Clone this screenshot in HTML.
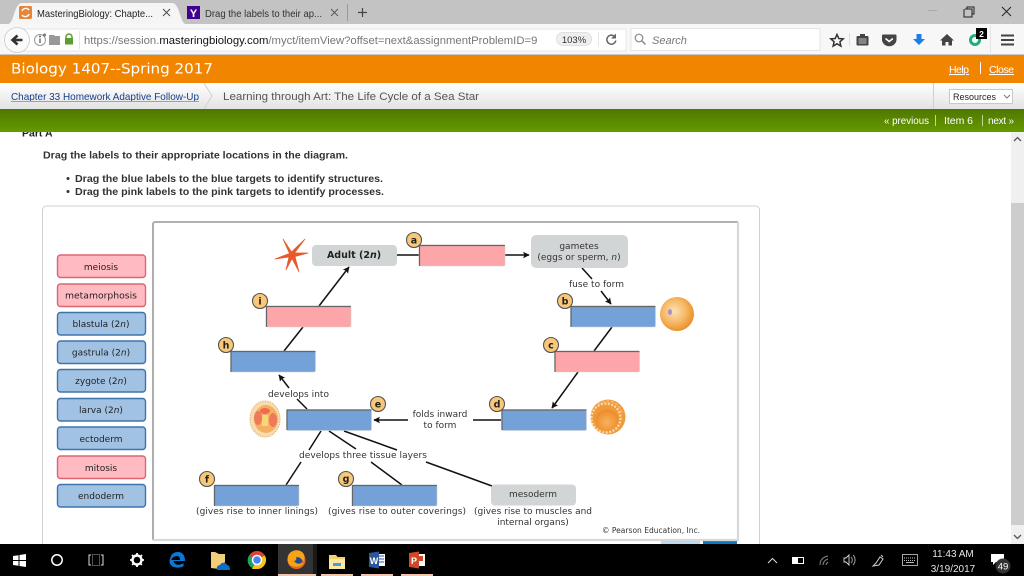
<!DOCTYPE html>
<html><head><meta charset="utf-8"><title>MasteringBiology</title>
<style>
html,body{margin:0;padding:0;width:1024px;height:576px;overflow:hidden;background:#fff}
svg{display:block;filter:blur(.22px)}
text{white-space:pre}
.ui{font-family:"Liberation Sans",sans-serif}
.dv{font-family:"DejaVu Sans",sans-serif}
.d{font-family:"DejaVu Sans",sans-serif;font-size:9px;fill:#333}
.lab{font-family:"DejaVu Sans",sans-serif;font-size:9px;fill:#222;text-anchor:middle}
.b{font-family:"DejaVu Sans",sans-serif;font-size:9.5px;font-weight:bold;fill:#222;text-anchor:middle}
.q{font-family:"Liberation Sans",sans-serif;font-size:10.5px;font-weight:bold;fill:#333}
</style></head><body>
<svg width="1024" height="576" viewBox="0 0 1024 576" xmlns="http://www.w3.org/2000/svg">
<defs>
<linearGradient id="bc" x1="0" y1="0" x2="0" y2="1"><stop offset="0" stop-color="#ffffff"/><stop offset="1" stop-color="#e2e2e2"/></linearGradient>
<linearGradient id="gr" x1="0" y1="0" x2="0" y2="1"><stop offset="0" stop-color="#4f7700"/><stop offset="1" stop-color="#669a00"/></linearGradient>
<radialGradient id="egg" cx=".42" cy=".42" r=".62"><stop offset="0" stop-color="#fce2b8"/><stop offset=".55" stop-color="#f5b866"/><stop offset="1" stop-color="#e98d22"/></radialGradient>
<radialGradient id="bl" cx=".5" cy=".6" r=".5"><stop offset="0" stop-color="#f7b25e"/><stop offset="1" stop-color="#ee8f2c"/></radialGradient>
<clipPath id="urlclip"><rect x="80" y="30" width="457" height="20"/></clipPath>
<marker id="ah" viewBox="0 0 10 10" refX="9" refY="5" markerWidth="4.4" markerHeight="4.4" orient="auto-start-reverse" markerUnits="strokeWidth"><path d="M0 0L10 5L0 10L2 5Z" fill="#111"/></marker>
</defs>

<!-- tab strip -->
<rect width="1024" height="24" fill="#c3c3c3"/>
<path d="M8 24C14 24 14 3 22 3H172C180 3 180 24 186 24Z" fill="#f5f5f5"/>
<rect x="19" y="6" width="13" height="13" rx="1.500" fill="#e8853a"/>
<path d="M22 11a4 4 0 0 1 7-1M29 14a4 4 0 0 1-7 1" stroke="#fff" stroke-width="1.400" fill="none"/>
<text class="ui" x="37" y="17" font-size="10.500" fill="#222" textLength="116" lengthAdjust="spacingAndGlyphs">MasteringBiology: Chapte...</text>
<path d="M163 9l7 7M170 9l-7 7" stroke="#444" stroke-width=".9"/>
<rect x="187" y="6" width="13" height="13" fill="#400090"/>
<text class="ui" x="193.500" y="17" font-size="11" font-weight="bold" fill="#fff" text-anchor="middle">Y</text>
<text class="ui" x="205" y="17" font-size="10.500" fill="#333" textLength="117" lengthAdjust="spacingAndGlyphs">Drag the labels to their ap...</text>
<path d="M331 9l7 7M338 9l-7 7" stroke="#555" stroke-width=".9"/>
<rect x="347" y="4" width="1" height="17" fill="#999"/>
<path d="M358 12.500h9M362.500 8v9" stroke="#444" stroke-width="1.200"/>
<rect x="928" y="10" width="9" height="1" fill="#aaa"/>
<path d="M965 9h7v8h-8v-8M967 9v-2h7v7h-2" stroke="#222" fill="none" stroke-width="1"/>
<path d="M1002 7l9 9M1011 7l-9 9" stroke="#222" stroke-width="1"/>

<!-- toolbar -->
<rect y="24" width="1024" height="30" fill="#f7f7f7"/>
<rect y="54" width="1024" height="1" fill="#c8c8c8"/>
<rect x="20" y="29" width="606" height="22" rx="1" fill="#fff" stroke="#e4e4e4"/>
<rect x="631" y="28.500" width="189" height="22" fill="#fff" stroke="#e4e4e4"/>
<circle cx="17" cy="40" r="12.500" fill="#fbfbfb" stroke="#d4d4d4"/>
<path d="M22.500 40H13M17.500 35.500L12.500 40L17.500 44.500" stroke="#333" stroke-width="2.600" fill="none"/>
<circle cx="40" cy="40" r="5.500" fill="none" stroke="#999"/>
<path d="M40 38.500v4.500" stroke="#666" stroke-width="1.400"/><circle cx="40" cy="36.500" r="1" fill="#666"/><circle cx="44.500" cy="35" r="1.500" fill="#777"/>
<path d="M49 35h5l1 1h5v9h-11z" fill="#999"/>
<path d="M66 38v-1a3 3 0 0 1 6 0v1" stroke="#5a9e30" stroke-width="1.500" fill="none"/><rect x="65" y="38" width="8" height="6.500" fill="#5a9e30"/>
<rect x="79" y="31" width="1" height="18" fill="#e6e6e6"/>
<g clip-path="url(#urlclip)"><text class="ui" x="84" y="44" font-size="11.300" fill="#777">https://session.<tspan fill="#111">masteringbiology.com</tspan>/myct/itemView?offset=next&amp;assignmentProblemID=92</text></g>
<rect x="556.500" y="32.500" width="35" height="13" rx="6.500" fill="#efefef" stroke="#e0e0e0"/>
<text class="ui" x="574" y="43" font-size="9.500" fill="#333" text-anchor="middle">103%</text>
<rect x="598" y="32" width="1" height="15" fill="#e8e8e8"/>
<path d="M615 37a4.500 4.500 0 1 0 .8 3.500" stroke="#666" stroke-width="1.500" fill="none"/><path d="M616 33.500v5h-5z" fill="#666"/>
<circle cx="639" cy="38" r="3.800" fill="none" stroke="#888" stroke-width="1.200"/><path d="M642 41l3.500 3.500" stroke="#888" stroke-width="1.500"/>
<text class="ui" x="652" y="44" font-size="11" font-style="italic" fill="#777">Search</text>
<path d="M837 34.500l1.800 4 4.400.4-3.300 2.900 1 4.300-3.900-2.300-3.900 2.300 1-4.300-3.300-2.900 4.400-.4z" fill="none" stroke="#333" stroke-width="1.500"/>
<rect x="849" y="33" width="1" height="13" fill="#ddd"/>
<rect x="856.500" y="36" width="12" height="9.500" rx="1" fill="#444"/><rect x="860" y="34" width="5" height="3" fill="#444"/>
<path d="M858.500 39h8M858.500 41h8M858.500 43h8" stroke="#eee" stroke-width=".8"/>
<path d="M883 34.500h12.500a1 1 0 0 1 1 1v4a7 6.500 0 0 1-14.500 0v-4a1 1 0 0 1 1-1z" fill="#444"/><path d="M885.500 38.500l3.700 3 3.700-3" stroke="#fff" stroke-width="1.600" fill="none"/>
<path d="M916.500 34h5v5h3.500l-6 6-6-6h3.500z" fill="#1a7fe8"/>
<path d="M947 34l-7 6.500h2v5h3.500v-3.500h3v3.500h3.500v-5h2z" fill="#444"/>
<circle cx="975" cy="40" r="4.500" fill="none" stroke="#1fae7f" stroke-width="3"/>
<rect x="976" y="28" width="11" height="11" fill="#000"/>
<text class="ui" x="981.500" y="37" font-size="8.500" font-weight="bold" fill="#fff" text-anchor="middle">2</text>
<rect x="990" y="25" width="1" height="28" fill="#e4e4e4"/>
<path d="M1001 35.500h13M1001 40h13M1001 44.500h13" stroke="#444" stroke-width="2"/>

<!-- page body -->
<rect y="132" width="1024" height="412" fill="#fff"/>
<text class="ui" x="22" y="136.500" font-size="10.500" font-weight="bold" fill="#222">Part A</text>

<!-- orange -->
<rect y="55" width="1024" height="28" fill="#f28500"/>
<text class="dv" x="11" y="73.500" font-size="14.500" fill="#fff" textLength="202" lengthAdjust="spacingAndGlyphs">Biology 1407--Spring 2017</text>
<text class="ui" x="949" y="73" font-size="10.500" fill="#fff" text-decoration="underline" textLength="20">Help</text>
<rect x="980" y="62" width="1" height="12" fill="#fff"/>
<text class="ui" x="989" y="73" font-size="10.500" fill="#fff" text-decoration="underline" textLength="25">Close</text>

<!-- breadcrumb -->
<rect y="83" width="1024" height="26" fill="url(#bc)"/>
<text class="ui" x="11" y="100" font-size="10.500" fill="#1a3e8c" textLength="188" lengthAdjust="spacingAndGlyphs">Chapter 33 Homework Adaptive Follow-Up</text>
<rect x="11" y="101" width="188" height="1" fill="#8ea2c8"/>
<path d="M204 83L212 96L204 109" fill="none" stroke="#d2d2d2"/>
<text class="ui" x="223" y="100" font-size="11" fill="#555" textLength="256" lengthAdjust="spacingAndGlyphs">Learning through Art: The Life Cycle of a Sea Star</text>
<rect x="933" y="83" width="1" height="26" fill="#cfcfcf"/>
<rect x="949.500" y="89.500" width="63" height="14" fill="#fff" stroke="#c8c8c8"/>
<text class="ui" x="953" y="100" font-size="9.500" fill="#222" textLength="43" lengthAdjust="spacingAndGlyphs">Resources</text>
<path d="M1004 95l3 3 3-3" stroke="#777" fill="none"/>

<!-- green -->
<rect y="109" width="1024" height="23" fill="url(#gr)"/>
<text class="ui" x="884" y="124" font-size="10" fill="#fff" textLength="45" lengthAdjust="spacingAndGlyphs">« previous</text>
<rect x="935" y="115" width="1" height="11" fill="#c4d69a"/>
<text class="ui" x="944" y="124" font-size="10.500" fill="#fff" textLength="29">Item 6</text>
<rect x="982" y="115" width="1" height="11" fill="#c4d69a"/>
<text class="ui" x="988" y="124" font-size="10" fill="#fff" textLength="26">next »</text>

<!-- question -->
<text class="q" x="43" y="158.500" textLength="305" lengthAdjust="spacingAndGlyphs">Drag the labels to their appropriate locations in the diagram.</text>
<circle cx="68" cy="178.500" r="1.500" fill="#333"/><circle cx="68" cy="191.500" r="1.500" fill="#333"/>
<text class="q" x="75" y="182" textLength="308" lengthAdjust="spacingAndGlyphs">Drag the blue labels to the blue targets to identify structures.</text>
<text class="q" x="75" y="195" textLength="309" lengthAdjust="spacingAndGlyphs">Drag the pink labels to the pink targets to identify processes.</text>
<path d="M42.500 544V210a4 4 0 0 1 4-4H755.500a4 4 0 0 1 4 4V544" fill="none" stroke="#d0d0d0"/>

<!-- scrollbar -->
<rect x="1011" y="132" width="13" height="412" fill="#f0f0f0"/>
<rect x="1011" y="203" width="13" height="322" fill="#cdcdcd"/>
<path d="M1014 141l3.500-3.500 3.500 3.500M1014 535l3.500 3.500 3.500-3.500" stroke="#555" stroke-width="1.300" fill="none"/>

<g>
<!-- diagram frame -->
<rect x="661" y="540" width="39" height="4" fill="#b7dbf2"/>
<rect x="703" y="540" width="34" height="4" fill="#0d79c0"/>
<rect x="153.500" y="222.500" width="585" height="317" rx="2" fill="#fff"/>
<path d="M153 540V224a2 2 0 0 1 2-2H738" fill="none" stroke="#a6a6a6" stroke-width="1.800"/>
<path d="M738 222V540H153" fill="none" stroke="#d8d8d8" stroke-width="2.200"/>

<!-- left labels -->
<g stroke-width="1.400">
<rect x="57.500" y="255" width="88" height="22.500" rx="3" fill="#ffbac2" stroke="#dc6570"/>
<rect x="57.500" y="284" width="88" height="22.500" rx="3" fill="#ffbac2" stroke="#dc6570"/>
<rect x="57.500" y="312.500" width="88" height="22.500" rx="3" fill="#a2c2e4" stroke="#3e74ae"/>
<rect x="57.500" y="341" width="88" height="22.500" rx="3" fill="#a2c2e4" stroke="#3e74ae"/>
<rect x="57.500" y="369.500" width="88" height="22.500" rx="3" fill="#a2c2e4" stroke="#3e74ae"/>
<rect x="57.500" y="398.500" width="88" height="22.500" rx="3" fill="#a2c2e4" stroke="#3e74ae"/>
<rect x="57.500" y="427" width="88" height="22.500" rx="3" fill="#a2c2e4" stroke="#3e74ae"/>
<rect x="57.500" y="456" width="88" height="22.500" rx="3" fill="#ffbac2" stroke="#dc6570"/>
<rect x="57.500" y="484.500" width="88" height="22.500" rx="3" fill="#a2c2e4" stroke="#3e74ae"/>
</g>
<text class="lab" x="101" y="270">meiosis</text>
<text class="lab" x="101" y="298.500" textLength="72" lengthAdjust="spacingAndGlyphs">metamorphosis</text>
<text class="lab" x="101" y="327">blastula (2<tspan font-style="italic">n</tspan>)</text>
<text class="lab" x="101" y="355.500">gastrula (2<tspan font-style="italic">n</tspan>)</text>
<text class="lab" x="101" y="384">zygote (2<tspan font-style="italic">n</tspan>)</text>
<text class="lab" x="101" y="413">larva (2<tspan font-style="italic">n</tspan>)</text>
<text class="lab" x="101" y="442">ectoderm</text>
<text class="lab" x="101" y="471">mitosis</text>
<text class="lab" x="101" y="499">endoderm</text>

<!-- connectors -->
<g stroke="#111" stroke-width="1.500" fill="none">
<path d="M397 255H419"/>
<path d="M505 255H529" marker-end="url(#ah)"/>
<path d="M582 268L592 279"/>
<path d="M601 291L611 304" marker-end="url(#ah)"/>
<path d="M612 327L594 351"/>
<path d="M578 372L552 408" marker-end="url(#ah)"/>
<path d="M473 420H501"/>
<path d="M408 420H374" marker-end="url(#ah)"/>
<path d="M307 409L297 399"/>
<path d="M289 388L279 375" marker-end="url(#ah)"/>
<path d="M284 351L303 327"/>
<path d="M319 306L349 267" marker-end="url(#ah)"/>
<path d="M321 431L309 450"/>
<path d="M301 462L286 485"/>
<path d="M329 431L356 449"/>
<path d="M371 462L402 485"/>
<path d="M344 431L397 450"/>
<path d="M426 462L492 486"/>
</g>

<!-- grey boxes -->
<rect x="312" y="245" width="85" height="21" rx="4" fill="#d2d5d6"/>
<rect x="531" y="235" width="97" height="33" rx="5" fill="#d2d5d6"/>
<rect x="491" y="484.500" width="85" height="21" rx="4" fill="#d2d5d6"/>

<!-- targets -->
<g stroke="#d0d0d0" stroke-width=".6">
<rect x="419" y="245" width="86" height="21" rx="1.500" fill="#fca6aa"/>
<rect x="266" y="306" width="85" height="21" rx="1.500" fill="#fca6aa"/>
<rect x="554.500" y="351" width="85" height="21" rx="1.500" fill="#fca6aa"/>
<rect x="230.500" y="351" width="85" height="21" rx="1.500" fill="#74a1d8"/>
<rect x="570.500" y="306" width="85" height="21" rx="1.500" fill="#74a1d8"/>
<rect x="501.500" y="409.500" width="85" height="21" rx="1.500" fill="#74a1d8"/>
<rect x="286.500" y="409.500" width="85" height="21" rx="1.500" fill="#74a1d8"/>
<rect x="214" y="485" width="85" height="21" rx="1.500" fill="#74a1d8"/>
<rect x="352" y="485" width="85" height="21" rx="1.500" fill="#74a1d8"/>
</g>
<path d="M419.500 266V245.500H505M266.500 327V306.500H351M555 372V351.500H639.500M231 372V351.500H315.500M571 327V306.500H655.500M502 430V410H586.500M287 430V410H371.500M214.500 506V485.500H299M352.500 506V485.500H437" fill="none" stroke="#666" stroke-width="1.200"/>

<!-- badges -->
<g fill="#f8c878" stroke="#555" stroke-width="1.100">
<circle cx="414" cy="240" r="7.500"/><circle cx="260" cy="301" r="7.500"/><circle cx="226" cy="345" r="7.500"/>
<circle cx="565" cy="301" r="7.500"/><circle cx="551" cy="345" r="7.500"/><circle cx="497" cy="404" r="7.500"/>
<circle cx="378" cy="404" r="7.500"/><circle cx="207" cy="479" r="7.500"/><circle cx="346" cy="479" r="7.500"/>
</g>
<text class="b" x="414" y="243.500">a</text><text class="b" x="260" y="304.500">i</text><text class="b" x="226" y="348.500">h</text>
<text class="b" x="565" y="304.500">b</text><text class="b" x="551" y="348.500">c</text><text class="b" x="497" y="407.500">d</text>
<text class="b" x="378" y="407.500">e</text><text class="b" x="207" y="482.500">f</text><text class="b" x="346" y="482">g</text>

<!-- diagram text -->
<text class="b" x="354" y="258" font-size="9">Adult (2<tspan font-style="italic">n</tspan>)</text>
<text class="d" x="579" y="249" text-anchor="middle">gametes</text>
<text class="d" x="579" y="260" text-anchor="middle">(eggs or sperm, <tspan font-style="italic">n</tspan>)</text>
<text class="d" x="569" y="287" textLength="55">fuse to form</text>
<text class="d" x="268" y="397" textLength="61">develops into</text>
<text class="d" x="440" y="417" text-anchor="middle">folds inward</text>
<text class="d" x="440" y="428" text-anchor="middle">to form</text>
<text class="d" x="299" y="458" textLength="128">develops three tissue layers</text>
<text class="d" x="533" y="497" text-anchor="middle">mesoderm</text>
<text class="d" x="196" y="514" textLength="122">(gives rise to inner linings)</text>
<text class="d" x="328" y="514" textLength="138">(gives rise to outer coverings)</text>
<text class="d" x="474" y="514" textLength="118">(gives rise to muscles and</text>
<text class="d" x="533" y="525" text-anchor="middle">internal organs)</text>
<text class="dv" x="602" y="533" font-size="7.500" fill="#333" textLength="98">© Pearson Education, Inc.</text>

<!-- starfish -->
<path d="M283 239L291.500 252L305 239L294.500 253L308 253L295 256.500L299 272L292 258.500L286 270L289 257L275 259L289.500 253.500Z" fill="#e8582a" stroke="#e8582a" stroke-width=".7" stroke-linejoin="round"/>

<!-- zygote -->
<circle cx="677" cy="314" r="17" fill="url(#egg)"/>
<ellipse cx="670" cy="312" rx="2" ry="3" fill="#a890c8"/>

<!-- blastula -->
<circle cx="608" cy="417" r="17.500" fill="#f19a3c"/>
<circle cx="606" cy="418" r="14.500" fill="none" stroke="#fbdcae" stroke-width="2.200" stroke-dasharray="2 1.500"/>
<ellipse cx="607" cy="420" rx="11.500" ry="11" fill="url(#bl)"/>
<path d="M598 404a15 15 0 0 1 24 10" fill="none" stroke="#f6b878" stroke-width="1.500" stroke-dasharray="3 1.500"/>

<!-- larva -->
<ellipse cx="265" cy="419" rx="15" ry="18" fill="#f7dcae" stroke="#e5b178" stroke-dasharray="1.500 1"/>
<ellipse cx="266" cy="419" rx="12" ry="14" fill="#f4b060"/>
<ellipse cx="258" cy="418" rx="4" ry="7" fill="#ee7a5a"/>
<ellipse cx="273" cy="420" rx="4" ry="7" fill="#ee7a5a"/>
<ellipse cx="265" cy="411" rx="5" ry="3" fill="#ef6a50"/>
<rect x="262" y="415" width="6" height="11" fill="#f7d878"/>
</g>

<!-- taskbar -->
<rect y="544" width="1024" height="32" fill="#000"/>
<rect x="278" y="544" width="35" height="32" fill="#333"/>
<rect x="313" y="544" width="4" height="32" fill="#1a1a1a"/>
<rect x="278" y="574" width="38" height="2" fill="#f2c4ae"/>
<rect x="321" y="574" width="32" height="2" fill="#f2c4ae"/>
<rect x="361" y="574" width="32" height="2" fill="#f2c4ae"/>
<rect x="401" y="574" width="32" height="2" fill="#f2c4ae"/>
<!-- win -->
<path d="M13 556l5.500-.8V560H13zM19.500 555l6.500-1V560h-6.500zM13 561h5.500v4.800L13 565zM19.500 561H26v6l-6.500-1z" fill="#fff"/>
<circle cx="57" cy="560" r="5.200" fill="none" stroke="#fff" stroke-width="1.500"/>
<path d="M91 555h-2v10h2M101 555h2v10h-2" fill="none" stroke="#ddd"/><rect x="92.500" y="554.500" width="7" height="11" fill="none" stroke="#555"/>
<!-- gear -->
<circle cx="137" cy="560" r="4.500" fill="none" stroke="#fff" stroke-width="2.400"/>
<path d="M137 553v14M130 560h14M132 555l10 10M142 555l-10 10" stroke="#fff" stroke-width="1.800" stroke-dasharray="2.200 9.600"/>
<!-- edge -->
<path d="M170 560c.5-6 4-8 8-8 5 0 7 4 7 9h-11.500c.4 3.600 5 5 10 2.300v3c-6 3-14 1-14-5 0-3 2-5 4-6-1.200 1-2 2.700-2 4.700h8.500c0-2.500-1-4-3-4-3 0-5 2-7 5z" fill="#0a78d7"/>
<!-- onedrive folder -->
<path d="M211 552l4 0 4 2 6 0v8l-6 7-8-1z" fill="#f2cf76"/>
<path d="M217 570c-1-3 1-5 3-5 1-3 6-3 7 0 2 0 3 2 3 5z" fill="#0a6fc4"/>
<!-- chrome -->
<circle cx="257" cy="560" r="9" fill="#dc4437"/>
<path d="M257 560L264.800 555.500A9 9 0 0 1 257 569L252 569Z" fill="#f5c518"/>
<path d="M257 560L252 568A9 9 0 0 1 249 555.500Z" fill="#1ea362"/>
<circle cx="257" cy="560" r="4.500" fill="#4285f4" stroke="#fff" stroke-width="1.500"/>
<!-- firefox -->
<circle cx="296.500" cy="560" r="9" fill="#e66a1f"/>
<circle cx="298" cy="559" r="5" fill="#1d4b8e"/>
<path d="M289 554c3-4 9-5 13-2 3 2 3 7 1 10-1-3-3-5-7-5 1 2 0 4-2 4 2 3 6 4 10 1-3 6-11 6-15 2-2-3-2-7 0-10z" fill="#f7a21b"/>
<!-- explorer -->
<path d="M329 555h7l1.500 2H345v12h-16z" fill="#f3d16e"/>
<rect x="329" y="559" width="16" height="10" fill="#fbe7a2"/>
<rect x="333" y="563" width="8" height="3" fill="#3f9fe0"/>
<!-- word -->
<rect x="374" y="554" width="11" height="12" fill="#fff"/><path d="M376 556h8M376 559h8M376 562h8" stroke="#2b579a"/>
<path d="M369 553l10-1.500v17L369 567z" fill="#2b579a"/>
<text class="ui" x="374" y="564" font-size="9" font-weight="bold" fill="#fff" text-anchor="middle">W</text>
<!-- ppt -->
<rect x="414" y="554" width="11" height="12" fill="#fff"/><rect x="418" y="556" width="5" height="5" fill="#d24726"/>
<path d="M409 553l10-1.500v17L409 567z" fill="#d24726"/>
<text class="ui" x="414" y="564" font-size="9" font-weight="bold" fill="#fff" text-anchor="middle">P</text>
<!-- tray -->
<path d="M768 563l4.500-4.500 4.500 4.500" fill="none" stroke="#ddd"/>
<rect x="792.500" y="557.500" width="11" height="6" fill="none" stroke="#fff"/><rect x="793" y="558" width="5" height="5" fill="#fff"/>
<path d="M820 565c0-5 3-8 8-9M823 565c0-3 2-5 5-6M826 565c0-1 1-2 2-3" fill="none" stroke="#888"/>
<path d="M844 558h2l3-3v10l-3-3h-2z" fill="none" stroke="#ddd" stroke-width=".9"/><path d="M851 557a4 4 0 0 1 0 6M853 555a7 7 0 0 1 0 10" fill="none" stroke="#aaa" stroke-width=".9"/>
<path d="M873 566l3-3 4-6 3 2-4 6zM881 555l2 2" fill="none" stroke="#ccc"/>
<rect x="902.500" y="554.500" width="15" height="11" fill="none" stroke="#ccc" stroke-width=".8"/><path d="M904 558h12M904 560.500h12" stroke="#bbb" stroke-dasharray="1 1"/><rect x="906" y="562" width="8" height="1" fill="#bbb"/>
<text class="ui" x="953" y="557" font-size="10" fill="#e6e6e6" text-anchor="middle">11:43 AM</text>
<text class="ui" x="953" y="572" font-size="10" fill="#e6e6e6" text-anchor="middle">3/19/2017</text>
<path d="M991 554h13v8h-8l-3 3v-3h-2z" fill="#fff"/>
<circle cx="1003" cy="566" r="7.500" fill="#333"/>
<text class="ui" x="1003" y="569.500" font-size="9.500" fill="#fff" text-anchor="middle">49</text>
</svg>
</body></html>
